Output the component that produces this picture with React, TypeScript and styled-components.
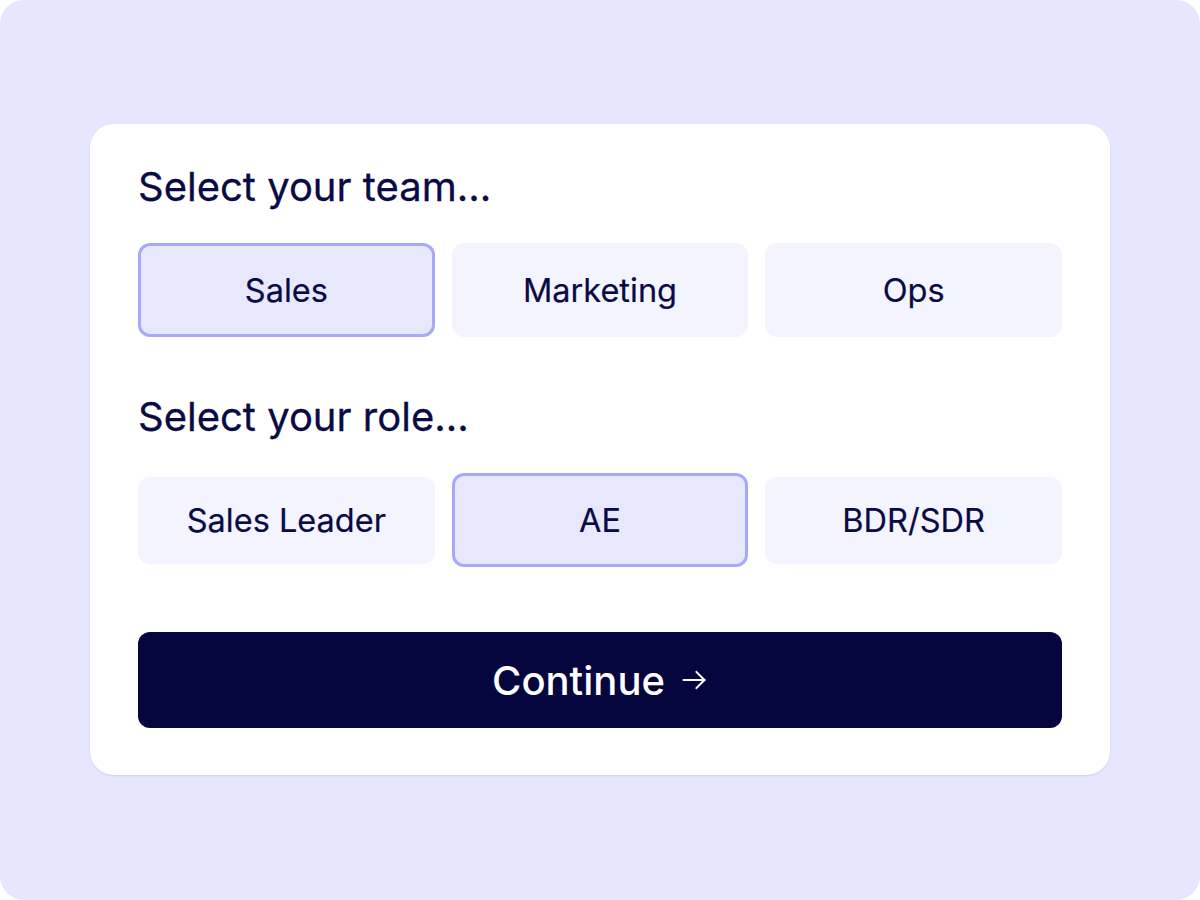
import React, { useState } from "react";
import styled, { createGlobalStyle } from "styled-components";

const Global = createGlobalStyle`
  html, body { margin: 0; padding: 0; background: #ffffff; }
  body { font-family: Inter, "Noto Sans", sans-serif; -webkit-font-smoothing: antialiased; }
  * { box-sizing: border-box; }
`;

const Frame = styled.div`
  width: 1200px;
  height: 900px;
  background: #e6e6fe;
  border-radius: 24px;
  display: flex;
  justify-content: center;
  align-items: flex-start;
  padding-top: 124px;
`;

const Card = styled.div`
  width: 1020px;
  background: #ffffff;
  border-radius: 24px;
  padding: 37px 48px 47px;
  box-shadow: 0 1px 2px rgba(60, 60, 140, 0.12);
  display: flex;
  flex-direction: column;
`;

const Heading = styled.h2<{ $top?: number }>`
  margin: ${(p) => p.$top ?? 0}px 0 0;
  font-size: 40px;
  line-height: 52px;
  font-weight: 400;
  color: #0a0a45;
  letter-spacing: 0;
  -webkit-text-stroke: 0.3px #0a0a45;
`;

const Row = styled.div<{ $top: number }>`
  margin-top: ${(p) => p.$top}px;
  display: grid;
  grid-template-columns: repeat(3, 1fr);
  column-gap: 17px;
  align-items: center;
  height: 94px;
`;

const Option = styled.button<{ $selected: boolean; $h: number }>`
  height: ${(p) => (p.$selected ? 94 : p.$h)}px;
  border-radius: 12px;
  border: ${(p) => (p.$selected ? "3px solid #a8a8f8" : "3px solid transparent")};
  background: ${(p) => (p.$selected ? "#e8e8fd" : "#f4f4fe")};
  color: #0a0a45;
  font-family: Inter, "Noto Sans", sans-serif;
  font-size: 32.5px;
  font-weight: 400;
  -webkit-text-stroke: 0.2px #0a0a45;
  display: flex;
  align-items: center;
  justify-content: center;
  cursor: pointer;
  padding: 0;
`;

const Continue = styled.button`
  margin-top: 65px;
  height: 96px;
  border: none;
  border-radius: 12px;
  background: #06063f;
  color: #ffffff;
  font-family: Inter, "Noto Sans", sans-serif;
  font-size: 40px;
  font-weight: 500;
  display: flex;
  align-items: center;
  justify-content: center;
  gap: 15px;
  cursor: pointer;
  padding: 0;
`;

const Arrow = () => (
  <svg width="28" height="28" viewBox="0 0 24 24" fill="none" stroke="#ffffff" strokeWidth="1.7" strokeLinecap="round" strokeLinejoin="round">
    <path d="M3 12h18" />
    <path d="M14 5l7 7-7 7" />
  </svg>
);

export default function App() {
  const [team, setTeam] = useState("Sales");
  const [role, setRole] = useState("AE");
  const teams = ["Sales", "Marketing", "Ops"];
  const roles = ["Sales Leader", "AE", "BDR/SDR"];
  return (
    <>
      <Global />
      <Frame>
        <Card>
          <Heading>Select your team...</Heading>
          <Row $top={30}>
            {teams.map((t) => (
              <Option key={t} $h={94} $selected={team === t} onClick={() => setTeam(t)}>
                {t}
              </Option>
            ))}
          </Row>
          <Heading $top={54}>Select your role...</Heading>
          <Row $top={30}>
            {roles.map((r) => (
              <Option key={r} $h={87} $selected={role === r} onClick={() => setRole(r)}>
                {r}
              </Option>
            ))}
          </Row>
          <Continue>
            Continue <Arrow />
          </Continue>
        </Card>
      </Frame>
    </>
  );
}
